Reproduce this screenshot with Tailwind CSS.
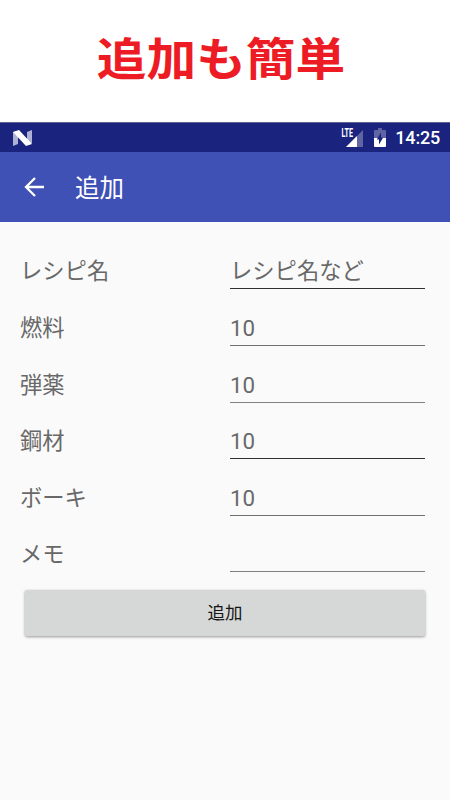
<!DOCTYPE html>
<html lang="ja">
<head>
  <meta charset="UTF-8" />
  <meta name="viewport" content="width=device-width, initial-scale=1.0" />
  <title>追加</title>
  <script src="https://cdn.jsdelivr.net/npm/@tailwindcss/browser@4"></script>
</head>
<body class="bg-[#fafafa] font-[Roboto,'Noto_Sans_CJK_JP',sans-serif] text-[#686868] h-[800px] overflow-hidden">
  <h1 class="h-[122px] bg-white pb-[9px] flex items-center justify-center text-[#ed1c24] text-[49.7px] leading-none font-bold font-['Noto_Sans_CJK_JP',sans-serif] pr-2"><span class="scale-y-92">追加も簡単</span></h1>

  <!-- Status bar -->
  <div class="h-[30px] bg-[#1a237e] border-t border-[#5c6292] flex items-center text-white">
    <svg class="ml-[13px] w-[19px] h-4" viewBox="0 0 19 16">
      <path d="M0 2L5 1V14L0 16ZM14 2L19 0V13L14 15Z" fill="#aeb1d2" />
      <path d="M0 2L6 0L19 14L13 16Z" fill="#fff" />
    </svg>
    <div class="ml-auto flex items-center pr-[10px]">
      <svg class="w-[23px] h-[20px] overflow-visible" viewBox="0 0 23 20">
        <path d="M5 19L22 2V19Z" fill="#5f65a4" />
        <path d="M5 19L16 8V19Z" fill="#fff" />
        <rect x="0" y="0" width="13" height="10.5" fill="#1a237e" />
        <text transform="scale(1 1.4)" x="0.5" y="6.7" font-size="9" font-weight="bold" fill="#fff" textLength="11.5" lengthAdjust="spacingAndGlyphs">LTE</text>
      </svg>
      <svg class="ml-[10px] w-3 h-[19px]" viewBox="0 0 12 19">
        <path d="M4 0H8V2H11Q12 2 12 3V10H0V3Q0 2 1 2H4Z" fill="#5f65a4" />
        <path d="M0 10H12V18Q12 19 11 19H1Q0 19 0 18Z" fill="#fff" />
        <path d="M7 4.5V9.5H9.2L5 16.5V11.5H2.8Z" fill="#1a237e" />
      </svg>
      <span class="ml-[9px] text-[18px] leading-none tracking-[-0.2px] font-medium">14:25</span>
    </div>
  </div>

  <!-- App bar -->
  <div class="h-[70px] bg-[#3f51b5] flex items-center text-white">
    <svg class="ml-[24px] w-[20px] h-[20px]" viewBox="0 0 20 20" fill="none" stroke="#fff" stroke-width="2.3">
      <path d="M20 10H2M11 1L2 10L11 19" />
    </svg>
    <h2 class="ml-[31px] pt-[4px] text-[24.5px] leading-none">追加</h2>
  </div>

  <form class="pt-[10px] pl-5 pr-[25px] text-[22.3px] leading-none">
    <label class="flex h-[57px]">
      <span class="w-[210px] pt-[28px]">レシピ名</span>
      <span class="flex-1 border-b border-[#303030] pt-[28px]">レシピ名など</span>
    </label>
    <label class="flex h-[57px]">
      <span class="w-[210px] pt-[28px]">燃料</span>
      <span class="flex-1 border-b border-[#707070] pt-[28px]">10</span>
    </label>
    <label class="flex h-[57px]">
      <span class="w-[210px] pt-[28px]">弾薬</span>
      <span class="flex-1 border-b border-[#808080] pt-[28px]">10</span>
    </label>
    <label class="flex h-[56px]">
      <span class="w-[210px] pt-[27px]">鋼材</span>
      <span class="flex-1 border-b border-[#303030] pt-[27px]">10</span>
    </label>
    <label class="flex h-[57px]">
      <span class="w-[210px] pt-[28px]">ボーキ</span>
      <span class="flex-1 border-b border-[#707070] pt-[28px]">10</span>
    </label>
    <label class="flex h-[56px]">
      <span class="w-[210px] pt-[27px]">メモ</span>
      <span class="flex-1 border-b border-[#808080]"></span>
    </label>
    <button type="button" class="mt-[18px] ml-[5px] w-[400px] h-[46px] pt-[2px] rounded-xs bg-[#d6d8d7] text-[17.5px] leading-none text-[#151515] shadow-[0_1px_3px_rgba(0,0,0,0.4)]">追加</button>
  </form>
</body>
</html>
